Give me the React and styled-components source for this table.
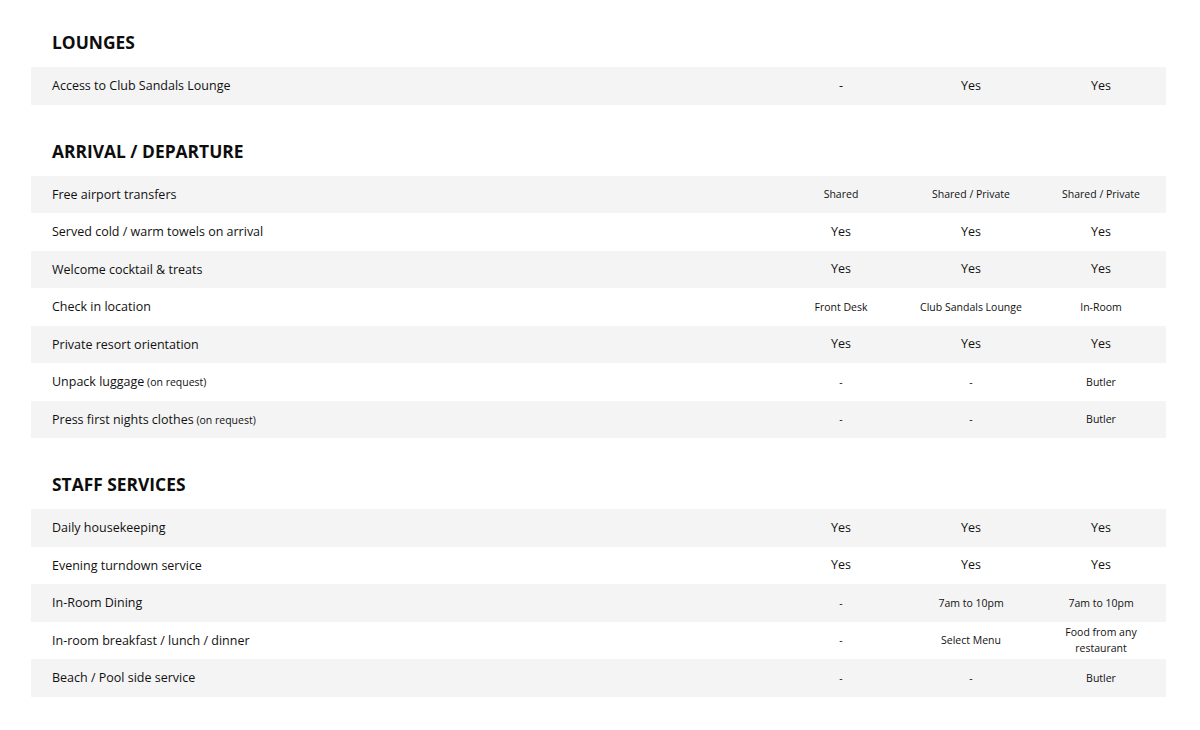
import React from "react";
import styled, { createGlobalStyle } from "styled-components";

const Global = createGlobalStyle`
  html, body { margin: 0; padding: 0; background: #ffffff; }
  body { font-family: "Open Sans", "Liberation Sans", sans-serif; color: #111; }
`;

const sections = [
  {
    title: "LOUNGES",
    rows: [{ label: "Access to Club Sandals Lounge", values: ["-", "Yes", "Yes"] }],
  },
  {
    title: "ARRIVAL / DEPARTURE",
    rows: [
      { label: "Free airport transfers", values: ["Shared", "Shared / Private", "Shared / Private"], small: true },
      { label: "Served cold / warm towels on arrival", values: ["Yes", "Yes", "Yes"] },
      { label: "Welcome cocktail & treats", values: ["Yes", "Yes", "Yes"] },
      { label: "Check in location", values: ["Front Desk", "Club Sandals Lounge", "In-Room"], small: true },
      { label: "Private resort orientation", values: ["Yes", "Yes", "Yes"] },
      { label: "Unpack luggage", note: "(on request)", values: ["-", "-", "Butler"], small: true },
      { label: "Press first nights clothes", note: "(on request)", values: ["-", "-", "Butler"], small: true },
    ],
  },
  {
    title: "STAFF SERVICES",
    rows: [
      { label: "Daily housekeeping", values: ["Yes", "Yes", "Yes"] },
      { label: "Evening turndown service", values: ["Yes", "Yes", "Yes"] },
      { label: "In-Room Dining", values: ["-", "7am to 10pm", "7am to 10pm"], small: true },
      { label: "In-room breakfast / lunch / dinner", values: ["-", "Select Menu", "Food from any restaurant"], small: true },
      { label: "Beach / Pool side service", values: ["-", "-", "Butler"], small: true },
    ],
  },
];

const App = () => {
  return (
    <>
      <Global />
      <Page>
        {sections.map((section, i) => (
          <Section key={section.title} first={i === 0}>
            <Heading>{section.title}</Heading>
            <Table>
              {section.rows.map((row, r) => (
                <Row key={row.label} shaded={r % 2 === 0}>
                  <Label>
                    {row.label}
                    {row.note && <Note> {row.note}</Note>}
                  </Label>
                  {row.values.map((v, c) => (
                    <Cell key={c} small={row.small}>{v}</Cell>
                  ))}
                </Row>
              ))}
            </Table>
          </Section>
        ))}
      </Page>
    </>
  );
};

export default App;

const Page = styled.div`
  width: 1135px;
  padding: 0 0 30px 31px;
`;

const Section = styled.section`
  margin-top: ${(p) => (p.first ? "30px" : "34px")};
`;

const Heading = styled.h2`
  margin: 0 0 13px 21px;
  font-size: 17.4px;
  line-height: 24px;
  font-weight: 700;
  color: #0d0d0d;
`;

const Table = styled.div`
  display: flex;
  flex-direction: column;
`;

const Row = styled.div`
  display: grid;
  grid-template-columns: 745px 130px 130px 130px;
  align-items: center;
  height: 37.5px;
  background: ${(p) => (p.shaded ? "#f4f4f4" : "#ffffff")};
`;

const Label = styled.div`
  padding-left: 21px;
  font-size: 12.5px;
  color: #111;
`;

const Note = styled.span`
  font-size: 10.5px;
`;

const Cell = styled.div`
  text-align: center;
  font-size: ${(p) => (p.small ? "10.5px" : "12.5px")};
  line-height: ${(p) => (p.small ? "16px" : "18px")};
  color: #111;
  padding: 0 8px;
`;
